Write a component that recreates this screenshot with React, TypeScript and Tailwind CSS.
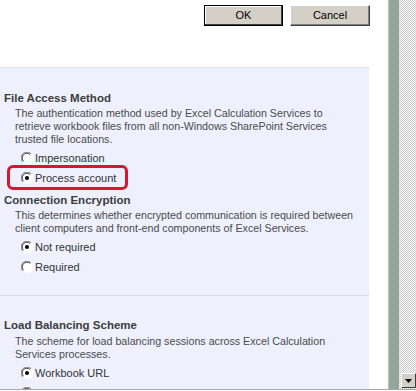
import React from "react";

function Radio({ checked }: { checked?: boolean }) {
  return (
    <svg width="12" height="12" viewBox="0 0 12 12" className="shrink-0">
      <circle cx="6" cy="6" r="5.5" fill="#ffffff" />
      <path d="M10.2 1.8 A5.5 5.5 0 0 0 1.8 10.2" fill="none" stroke="#808080" strokeWidth="1" />
      <path d="M9.2 2.6 A4.5 4.5 0 0 0 2.6 9.2" fill="none" stroke="#404040" strokeWidth="1" />
      <path d="M1.8 10.2 A5.5 5.5 0 0 0 10.2 1.8" fill="none" stroke="#ffffff" strokeWidth="1" />
      {checked && <circle cx="6" cy="6" r="2" fill="#000000" />}
    </svg>
  );
}

function RadioRow({ label, checked }: { label: string; checked?: boolean }) {
  return (
    <div className="h-[20px] flex items-center pl-[21px] gap-[2px]">
      <Radio checked={checked} />
      <span className="text-[#333333] leading-[20px] whitespace-nowrap">{label}</span>
    </div>
  );
}

function Header({ children }: { children: React.ReactNode }) {
  return (
    <div className="h-[16px] leading-[16px] pl-[4px] text-[11.5px] font-bold text-[#3c3c3c] whitespace-nowrap">
      {children}
    </div>
  );
}

function Desc({ lines }: { lines: string[] }) {
  return (
    <div className="pl-[15px] leading-[13px] text-[#4a4a4a] text-[10.7px] whitespace-nowrap">
      {lines.map((l, i) => (
        <div key={i}>{l}</div>
      ))}
    </div>
  );
}

export default function App() {
  return (
    <div
      className="w-[416px] h-[391px] overflow-hidden bg-white flex flex-col text-[11px]"
      style={{ fontFamily: '"Liberation Sans", Arial, sans-serif' }}
    >
      <div className="h-[389px] shrink-0 flex overflow-hidden">
        <div className="w-[388px] shrink-0 flex flex-col min-h-0">
          <div className="h-[67px] shrink-0 flex pt-[5px] pl-[204px] gap-[7px]">
            <button className="w-[79px] h-[21px] bg-[#d4d0c8] border border-black shadow-[inset_-1px_-1px_0_#404040,inset_1px_1px_0_#ffffff] text-[11px] text-black">
              OK
            </button>
            <button className="w-[80px] h-[21px] bg-[#d4d0c8] border-t border-l border-white border-r border-b border-r-[#404040] border-b-[#404040] shadow-[inset_-1px_-1px_0_#808080] text-[11px] text-black">
              Cancel
            </button>
          </div>
          <div className="w-[369px] flex-1 min-h-0 overflow-hidden bg-[#eef1fd] border-t border-[#dde2ee] flex flex-col pt-[22px]">
            <div className="shrink-0">
              <Header>File Access Method</Header>
            </div>
            <div className="mt-[1px] shrink-0">
              <Desc
                lines={[
                  "The authentication method used by Excel Calculation Services to",
                  "retrieve workbook files from all non-Windows SharePoint Services",
                  "trusted file locations.",
                ]}
              />
            </div>
            <div className="mt-[2px] shrink-0">
              <RadioRow label="Impersonation" />
              <div className="relative">
                <RadioRow label="Process account" checked />
                <div className="absolute left-[7px] top-[-3px] w-[121px] h-[25px] border-[3px] border-[#d9162f] rounded-[6px]" />
              </div>
            </div>
            <div className="mt-[4px] shrink-0">
              <Header>Connection Encryption</Header>
            </div>
            <div className="mt-[1px] shrink-0">
              <Desc
                lines={[
                  "This determines whether encrypted communication is required between",
                  "client computers and front-end components of Excel Services.",
                ]}
              />
            </div>
            <div className="mt-[2px] shrink-0">
              <RadioRow label="Not required" checked />
              <RadioRow label="Required" />
            </div>
            <div className="mt-[18px] h-[1px] shrink-0 bg-[#d6dae6]" />
            <div className="mt-[21px] shrink-0">
              <Header>Load Balancing Scheme</Header>
            </div>
            <div className="mt-[2px] shrink-0">
              <Desc
                lines={["The scheme for load balancing sessions across Excel Calculation", "Services processes."]}
              />
            </div>
            <div className="mt-[2px] shrink-0">
              <RadioRow label="Workbook URL" checked />
              <RadioRow label="Round Robin" />
            </div>
          </div>
        </div>
        <div className="w-[11px] shrink-0 bg-[#93a59d] border-l border-[#b4c3bc]" />
        <div className="flex-1 flex flex-col justify-end bg-[repeating-conic-gradient(#c8c8c8_0%_25%,#ffffff_0%_50%)] bg-[length:2px_2px]">
          <div className="w-[15px] h-[15px] ml-[2px] mb-[1px] bg-[#d4d0c8] border-t border-l border-white border-r border-b border-r-[#404040] border-b-[#404040] flex items-center justify-center">
            <svg width="7" height="4" viewBox="0 0 7 4">
              <path d="M0 0 H7 L3.5 4 Z" fill="#000" />
            </svg>
          </div>
        </div>
      </div>
      <div className="h-[1px] shrink-0 bg-[#a8a8a8]" />
      <div className="flex-1 bg-white" />
    </div>
  );
}
